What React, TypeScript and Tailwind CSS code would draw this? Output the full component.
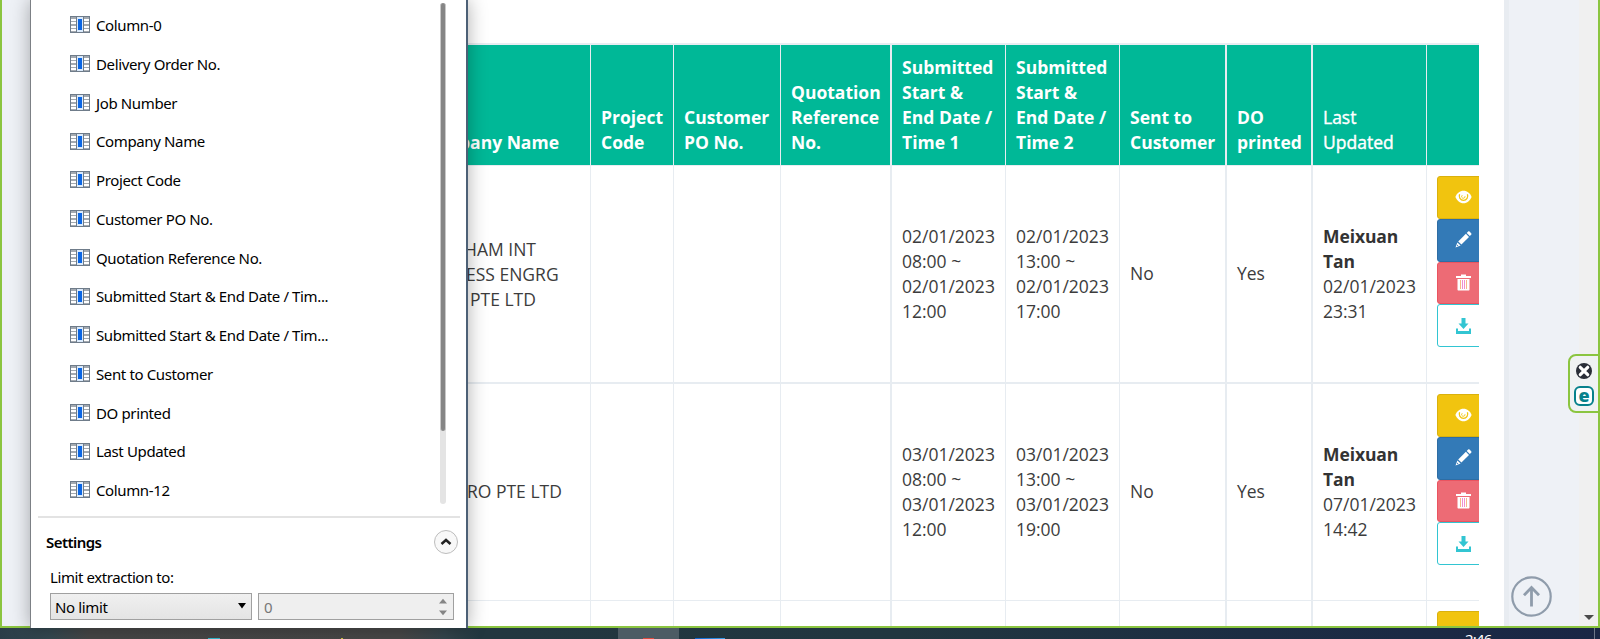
import React from "react";

const columns = [
  "Column-0",
  "Delivery Order No.",
  "Job Number",
  "Company Name",
  "Project Code",
  "Customer PO No.",
  "Quotation Reference No.",
  "Submitted Start & End Date / Tim...",
  "Submitted Start & End Date / Tim...",
  "Sent to Customer",
  "DO printed",
  "Last Updated",
  "Column-12",
];

const grid = "grid grid-cols-[122px_83px_107px_110px_115px_114px_106px_86px_115px_53px]";
const thin = "border-l border-[#e7ecf1] pl-[10px]";
const thick = "border-l-2 border-[#e7ecf1] pl-[10px]";
const cellBorders = [thin, thin, thin, thick, thin, thin, thick, thick];

const headers = [
  ["Project", "Code"],
  ["Customer", "PO No."],
  ["Quotation", "Reference", "No."],
  ["Submitted", "Start &", "End Date /", "Time 1"],
  ["Submitted", "Start &", "End Date /", "Time 2"],
  ["Sent to", "Customer"],
  ["DO", "printed"],
  ["Last", "Updated"],
];

type Line = { text: string; className: string };
type Row = { company: Line[]; cells: string[][] };

const rows: Row[] = [
  {
    company: [
      { text: "HAM INT", className: "ml-[-4px]" },
      { text: "ESS ENGRG", className: "ml-[-2px]" },
      { text: "PTE LTD", className: "ml-[2px]" },
    ],
    cells: [
      [], [], [],
      ["02/01/2023", "08:00 ~", "02/01/2023", "12:00"],
      ["02/01/2023", "13:00 ~", "02/01/2023", "17:00"],
      ["No"],
      ["Yes"],
      ["Meixuan", "Tan", "02/01/2023", "23:31"],
    ],
  },
  {
    company: [{ text: "RO PTE LTD", className: "ml-[-1px] pb-[2px]" }],
    cells: [
      [], [], [],
      ["03/01/2023", "08:00 ~", "03/01/2023", "12:00"],
      ["03/01/2023", "13:00 ~", "03/01/2023", "19:00"],
      ["No"],
      ["Yes"],
      ["Meixuan", "Tan", "07/01/2023", "14:42"],
    ],
  },
];

function ColumnIcon() {
  return (
    <svg width="20" height="17" viewBox="0 0 20 17" shapeRendering="crispEdges">
      <rect width="20" height="17" fill="#6f7c8a" />
      <rect x="1" y="1" width="18" height="15" fill="#a3a9b0" />
      <g fill="#fff">
        {[3, 6, 10, 13].map((y) => (
          <React.Fragment key={y}>
            <rect x="1" y={y} width="5" height="2" />
            <rect x="14" y={y} width="5" height="2" />
          </React.Fragment>
        ))}
      </g>
      <rect x="6" y="1" width="1" height="15" fill="#6f7c8a" />
      <rect x="13" y="1" width="1" height="15" fill="#6f7c8a" />
      <rect x="7" y="1" width="6" height="15" fill="#d9e9fb" />
      <rect x="8" y="3" width="4" height="11" fill="#0b66e4" />
    </svg>
  );
}

function EyeIcon() {
  return (
    <svg width="17" height="14" viewBox="0 0 17 14">
      <path d="M8.5 .8C4.8 .8 2 3.2 .4 6.9 2 10.6 4.8 13.2 8.5 13.2S15 10.6 16.6 6.9C15 3.2 12.2 .8 8.5 .8Z" fill="#fff" />
      <path d="M4.6 4.2c-1.2 3 .8 6.200 3.900 6.200s5.100-3.200 3.900-6.200" fill="none" stroke="#f1c40f" strokeWidth="1.300" />
      <path d="M7.300 5.200a1.700 1.700 0 1 0 2.700 1" fill="none" stroke="#f1c40f" strokeWidth=".9" />
    </svg>
  );
}

function PencilIcon() {
  return (
    <svg width="17" height="17" viewBox="0 0 17 17" fill="#fff">
      <path d="M13.100.6c.5-.4 1-.4 1.400 0l1.700 1.700c.4.4.4.9 0 1.400l-1.400 1.400-3.100-3.100z" />
      <path d="M10.900 2.800l3.100 3.100-7.600 7.700-3.200-3.100z" />
      <path d="M2.400 11.400l3.200 3.100L.5 16.400z" />
      <circle cx="2.600" cy="14.300" r=".6" fill="#337ab7" />
    </svg>
  );
}

function TrashIcon() {
  return (
    <svg width="15" height="17" viewBox="0 0 15 17">
      <path d="M5 .5h5v1.500h5v2H0v-2h5z" fill="#fff" />
      <path d="M1.500 5h12v10.500c0 .7-.4 1-1 1h-10c-.6 0-1-.3-1-1z" fill="#fff" />
      <path d="M4.500 6v9M10.500 6v9" stroke="#f6b98a" strokeWidth="1" />
      <path d="M6.500 6v9M8.500 6v9" stroke="#f08fd0" strokeWidth="1" />
    </svg>
  );
}

function DownloadIcon() {
  return (
    <svg width="15" height="16" viewBox="0 0 15 16" fill="#32c5d2">
      <path d="M5.500 0h4v5.500h3L7.500 11l-5-5.500h3z" />
      <path d="M0 10.500h2V13h11v-2.500h2V16H0z" />
    </svg>
  );
}

function Actions() {
  const base = "flex w-[60px] shrink-0 items-center justify-start rounded-[3px] border pl-[17px]";
  return (
    <div className="flex flex-col">
      <div className={`${base} h-[43px] border-[#dab10d] bg-[#f1c40f] pb-[2px]`}><EyeIcon /></div>
      <div className={`${base} h-[43px] border-[#2e6da4] bg-[#337ab7] pb-[2px]`}><PencilIcon /></div>
      <div className={`${base} h-[42px] border-[#ea5460] bg-[#ed6b75] pb-[2px] pl-[18px]`}><TrashIcon /></div>
      <div className={`${base} h-[43px] border-[#32c5d2] bg-white pl-[18px]`}><DownloadIcon /></div>
    </div>
  );
}

function DataRow({ row, borderClass }: { row: Row; borderClass: string }) {
  return (
    <div className={`${grid} ${borderClass} border-[#e7ecf1] text-[#3c3c3c]`}>
      <div className="flex flex-col justify-center whitespace-nowrap">
        {row.company.map((l) => (
          <div key={l.text} className={l.className}>{l.text}</div>
        ))}
      </div>
      {row.cells.map((lines, i) => (
        <div key={i} className={`flex flex-col justify-center whitespace-nowrap ${cellBorders[i]} ${lines.length === 1 ? "pb-px" : ""}`}>
          {lines.map((l, j) => (
            <div key={j} className={i === 7 && j < 2 ? "font-bold tracking-[-0.1px] text-[#333]" : ""}>{l}</div>
          ))}
        </div>
      ))}
      <div className={`${thin} pt-[10px]`}><Actions /></div>
    </div>
  );
}

function PageTable() {
  return (
    <div className="w-[1011px] shrink-0 overflow-hidden pt-[43px] font-['Open_Sans',sans-serif] text-[17.5px] leading-[25px]">
      <div className={`${grid} h-[123px] border-t-2 border-b border-[#e7ecf1] bg-[#00b897] text-white`}>
        <div className="flex items-end pb-[10px] whitespace-nowrap">
          <span className="ml-[-9px] font-bold">pany Name</span>
        </div>
        {headers.map((lines, i) => (
          <div key={i} className={`flex flex-col justify-end pb-[10px] whitespace-nowrap ${cellBorders[i]} ${i === 7 ? "font-normal [-webkit-text-stroke:0.4px_white]" : "font-bold"}`}>
            {lines.map((l) => <div key={l}>{l}</div>)}
          </div>
        ))}
        <div className={thin} />
      </div>
      <DataRow row={rows[0]} borderClass="h-[218px] border-b-2" />
      <DataRow row={rows[1]} borderClass="h-[217px] border-b" />
      <div className={`${grid} h-[25px]`}>
        <div />
        {cellBorders.map((b, i) => <div key={i} className={b} />)}
        <div className={`${thin} pt-[10px]`}>
          <div className="h-[43px] w-[60px] rounded-[3px] border border-[#dab10d] bg-[#f1c40f]" />
        </div>
      </div>
    </div>
  );
}

function ExtractionPanel() {
  return (
    <div className="absolute top-0 left-[30px] flex h-[628px] w-[438px] flex-col border-r-2 border-l border-r-[#4c6076] border-l-[#7c8085] bg-white font-['Noto_Sans',sans-serif] text-[15px] text-black shadow-[0_0_18px_rgba(0,0,0,0.32)]">
      <div className="flex h-[516px] shrink-0 justify-between">
        <ul className="flex flex-col pt-[5.4px] pl-[39px]">
          {columns.map((c, i) => (
            <li key={i} className="flex h-[38.75px] items-center gap-[6px] whitespace-nowrap">
              <ColumnIcon />
              <span className="pt-[1.2px] tracking-[-0.37px]">{c}</span>
            </li>
          ))}
        </ul>
        <div className="mt-[3px] mr-[20px] flex h-[501px] w-[6px] flex-col items-center rounded-full bg-[#e4e4e4]">
          <div className="h-[428px] w-full rounded-full border-x border-[#c8c8c8] bg-[#858585]" />
        </div>
      </div>
      <div className="mr-[6px] ml-[7px] h-[2px] shrink-0 bg-[#e3e3e3]" />
      <div className="flex h-[48px] shrink-0 items-center justify-between pr-[8px] pl-[15px]">
        <span className="font-semibold tracking-[-0.55px]">Settings</span>
        <div className="flex h-[24px] w-[24px] items-center justify-center rounded-full border border-[#bdbdbd] bg-[#f8f8f8]">
          <svg width="12" height="8" viewBox="0 0 12 8"><path d="M1.500 6 6 2l4.500 4" fill="none" stroke="#222" strokeWidth="2.500" /></svg>
        </div>
      </div>
      <div className="flex h-[27px] shrink-0 items-center pl-[19px] tracking-[-0.42px]">
        <span className="pb-[4px]">Limit extraction to:</span>
      </div>
      <div className="flex h-[27px] shrink-0 gap-[6px] pl-[19px]">
        <div className="flex w-[202px] items-center justify-between border border-[#a0a0a0] bg-linear-to-b from-[#f0f0f0] to-[#e4e4e4] pr-[5px] pl-[4px]">
          <span className="pt-[2px] tracking-[-0.35px]">No limit</span>
          <svg width="8" height="6" viewBox="0 0 8 6" className="mb-[2px]"><path d="M0 0h8L4 5.500z" /></svg>
        </div>
        <div className="flex w-[196px] items-center justify-between border border-[#a0a0a0] bg-[#efefef] pr-[5px] pl-[5px] text-[#777]">
          <span className="pt-[2px]">0</span>
          <svg width="10" height="18" viewBox="0 0 10 18" fill="#858585"><path d="M1 5.500h8L5 .8zM1 12.500h8L5 17.200z" /></svg>
        </div>
      </div>
    </div>
  );
}

function CaptureWidget() {
  return (
    <div className="absolute top-[354px] right-0 flex h-[59px] w-[32px] flex-col items-center gap-[6px] rounded-l-[8px] border-2 border-[#8bc540] bg-[#f0f2f3] pt-[6px]">
      <svg width="18" height="18" viewBox="0 0 18 18">
        <circle cx="9" cy="9" r="8" fill="#2a2e38" />
        <path d="M5.300 5.300l7.400 7.400M12.700 5.300l-7.400 7.400" stroke="#fff" strokeWidth="3.200" strokeLinecap="round" />
      </svg>
      <div className="flex h-[20px] w-[20px] items-center justify-center rounded-[6px] border-2 border-[#07818c] bg-white font-['Open_Sans',sans-serif] text-[18px] leading-none font-extrabold text-[#07818c]">
        <span className="pb-[3px]">e</span>
      </div>
    </div>
  );
}

function Taskbar() {
  return (
    <div className="flex h-[11px] items-end overflow-hidden bg-[linear-gradient(90deg,#2b3d48_0px,#344850_50px,#464646_90px,#474747_400px,#34454c_445px,#22373f_480px,#21363f_900px,#1c2d43_1250px,#1a2645_1600px)]">
      <div className="ml-[208px] h-px w-[12px] bg-[#2fb9cd]" />
      <div className="ml-[121px] h-px w-[2px] bg-[#c9c23c]" />
      <div className="ml-[275px] flex h-full w-[61px] items-end justify-center bg-[#4d5c64]">
        <div className="h-px w-[11px] bg-[#dd4b3e]" />
      </div>
      <div className="ml-[16px] h-px w-[30px] bg-linear-to-r from-[#0a63d1] to-[#3a9fe8]" />
      <div className="ml-[740px] h-[8px] w-[29px] font-['Noto_Sans',sans-serif] text-[15px] leading-[16px] tracking-[-0.8px] text-white">2:46</div>
      <div className="ml-[100px] h-full w-px bg-[#6d7688]" />
    </div>
  );
}

export default function App() {
  return (
    <div className="relative h-[639px] w-[1600px] overflow-hidden bg-[#eef1f6]">
      <div className="flex h-[628px] border-x-2 border-b-2 border-[#8bc540]">
        <div className="w-[30px] shrink-0" />
        <div className="flex w-[1472px] shrink-0 bg-white pl-[436px]">
          <PageTable />
        </div>
        <div className="flex w-[75px] shrink-0 items-end border-l-[5px] border-[#e8ecf1] pb-[9px] pl-[2px]">
          <svg width="42" height="42" viewBox="0 0 42 42" fill="none" stroke="#8f9cab" strokeWidth="2.200">
            <circle cx="20.500" cy="21.500" r="19.200" />
            <path d="M20.500 31.500V13M13 20.300l7.500-7.800 7.500 7.800" strokeWidth="2.800" />
          </svg>
        </div>
        <div className="flex grow items-end justify-center bg-[#f0f0f0] pb-[6px]">
          <svg width="10" height="5" viewBox="0 0 10 5" fill="#4a4a4a"><path d="M0 0h10L5 5z" /></svg>
        </div>
      </div>
      <Taskbar />
      <ExtractionPanel />
      <CaptureWidget />
    </div>
  );
}
